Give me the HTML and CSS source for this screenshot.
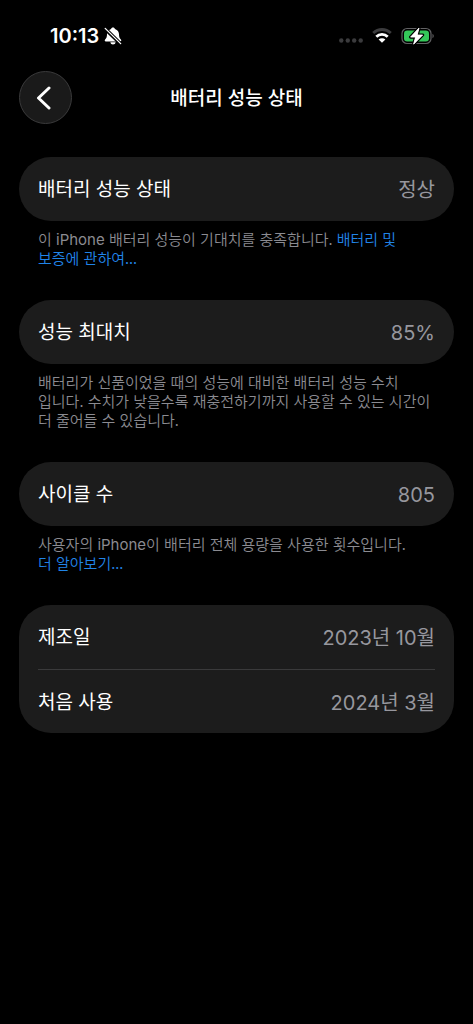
FILE: index.html
```html
<!DOCTYPE html>
<html lang="ko">
<head>
<meta charset="utf-8">
<meta name="viewport" content="width=device-width, initial-scale=1">
<title>배터리 성능 상태</title>
<link rel="stylesheet" href="styles.css">
</head>
<body>
<div class="status">
  <div class="status-left">
    <span class="clock">10:13</span>
    <svg class="bell" width="18" height="18" viewBox="0 0 18 18" aria-hidden="true">
      <path fill="#fff" d="M9 .5c1 0 1.800.6 2 1.500C13.600 2.900 15 5 15 7.300c0 2.800.6 3.900 1.900 5.200.8.900.3 2-.7 2H1.800c-1 0-1.500-1.100-.7-2C2.400 11.200 3 10.100 3 7.300c0-2.300 1.400-4.400 4-5.300C7.200 1.100 8 .5 9 .5zM6.400 15.300h5.200c-.2 1.500-1.300 2.200-2.600 2.200s-2.400-.7-2.600-2.200z"/>
      <path d="M.8 1.400l16 15.600" stroke="#000" stroke-width="3.600"/>
      <path d="M1.200 1.400l15.500 15.200" stroke="#fff" stroke-width="1.300" stroke-linecap="round"/>
    </svg>
  </div>
  <div class="status-right">
    <svg class="signal" width="24" height="5" viewBox="0 0 24 5" aria-hidden="true">
      <g fill="#3b3b3d"><circle cx="2.300" cy="2.500" r="2.200"/><circle cx="8.800" cy="2.500" r="2.200"/><circle cx="15.200" cy="2.500" r="2.200"/><circle cx="21.700" cy="2.500" r="2.200"/></g>
    </svg>
    <svg width="20" height="15" viewBox="0 0 20 15" aria-hidden="true">
      <g fill="none" stroke-width="2.800"><path stroke="#3b3b3d" d="M1.200 5c5-4.700 12.600-4.700 17.600 0"/><path stroke="#fff" d="M4.300 8.700c3.200-3.200 8.200-3.200 11.400 0"/></g>
      <path fill="#fff" d="M10 14.800l-3.400-3.400c1.900-1.700 4.900-1.700 6.800 0z"/>
    </svg>
    <svg width="34" height="18" viewBox="0 0 34 18" aria-hidden="true">
      <rect x="1" y="1.500" width="29" height="15" rx="5" fill="none" stroke="#626264" stroke-width="1.200"/>
      <path d="M31.500 6.800c1.700.7 1.700 3.700 0 4.400z" fill="#626264"/>
      <rect x="3" y="3.500" width="25" height="11" rx="3.200" fill="#34c759"/>
      <path d="M18 1L9.600 10.100h5L12.600 17.200 21.600 8h-5.400z" fill="#fff" stroke="#000" stroke-width="3.200" stroke-linejoin="round" paint-order="stroke"/>
      <path d="M18 1L9.600 10.100h5L12.600 17.200 21.600 8h-5.400z" fill="#fff" stroke="#fff" stroke-width=".8" stroke-linejoin="round"/>
    </svg>
  </div>
</div>
<header class="nav">
  <button class="back" type="button" aria-label="뒤로">
    <svg width="16" height="24" viewBox="0 0 16 24" aria-hidden="true"><path d="M13 2L2.500 12 13 22" fill="none" stroke="#fff" stroke-width="3" stroke-linecap="round" stroke-linejoin="round"/></svg>
  </button>
  <h1 class="title">배터리 성능 상태</h1>
</header>
<main class="content">
  <section>
    <div class="card"><div class="row"><span>배터리 성능 상태</span><span class="value">정상</span></div></div>
    <p class="note">이 <span class="latin">iPhone</span> 배터리 성능이 기대치를 충족합니다. <a href="#">배터리 및<br>보증에 관하여...</a></p>
  </section>
  <section>
    <div class="card"><div class="row"><span>성능 최대치</span><span class="value">85%</span></div></div>
    <p class="note">배터리가 신품이었을 때의 성능에 대비한 배터리 성능 수치<br>입니다. 수치가 낮을수록 재충전하기까지 사용할 수 있는 시간이<br>더 줄어들 수 있습니다.</p>
  </section>
  <section>
    <div class="card"><div class="row"><span>사이클 수</span><span class="value">805</span></div></div>
    <p class="note">사용자의 <span class="latin">iPhone</span>이 배터리 전체 용량을 사용한 횟수입니다.<br><a href="#">더 알아보기...</a></p>
  </section>
  <section>
    <div class="card">
      <div class="row"><span>제조일</span><span class="value">2023년 10월</span></div>
      <div class="row"><span>처음 사용</span><span class="value">2024년 3월</span></div>
    </div>
  </section>
</main>
</body>
</html>
```

FILE: styles.css
```css
* {
  box-sizing: border-box;
}

body {
  margin: 0;
  min-height: 100vh;
  background: #000;
  color: #fff;
  font-family: Inter, "Noto Sans CJK KR", sans-serif;
}

.status {
  display: flex;
  justify-content: space-between;
  align-items: center;
  height: 71px;
  padding: 0 38px 0 50px;
}

.status-left,
.status-right {
  display: flex;
  align-items: center;
}

.status-left {
  gap: 5px;
}

.status-right {
  gap: 9px;
}

.signal {
  position: relative;
  top: 5px;
}

.clock {
  font-size: 20px;
  font-weight: 600;
  line-height: 24px;
}

.nav {
  display: grid;
  grid-template-columns: 53px 1fr 53px;
  align-items: center;
  padding: 0 19px;
}

.back {
  display: flex;
  align-items: center;
  justify-content: center;
  width: 53px;
  height: 53px;
  padding: 0 4px 0 0;
  border: 1px solid #3a3a3b;
  border-radius: 50%;
  background: #1a1a1a;
}

.title {
  margin: 0;
  padding-top: 2px;
  font-size: 19px;
  font-weight: 500;
  line-height: 24px;
  text-align: center;
}

.content {
  display: flex;
  flex-direction: column;
  gap: 33px;
  padding: 33px 19px;
}

.card {
  padding: 0 19px;
  border-radius: 32px;
  background: #1c1c1c;
}

.row {
  display: flex;
  justify-content: space-between;
  align-items: center;
  height: 64px;
  padding-top: 2px;
  font-size: 19px;
  line-height: 24px;
}

.row + .row {
  border-top: 1px solid #3a3a3b;
}

.value {
  color: #97979e;
  font-size: 20px;
}

.note {
  margin: 0;
  padding: 8px 19px 0;
  color: #8b8b91;
  font-family: "Noto Sans CJK KR", sans-serif;
  font-size: 15px;
  font-weight: 350;
  line-height: 19px;
  white-space: nowrap;
}

.note a {
  color: #2084e8;
  text-decoration: none;
}

.latin {
  font-family: Inter, sans-serif;
  font-weight: 400;
  line-height: 0;
}
```
